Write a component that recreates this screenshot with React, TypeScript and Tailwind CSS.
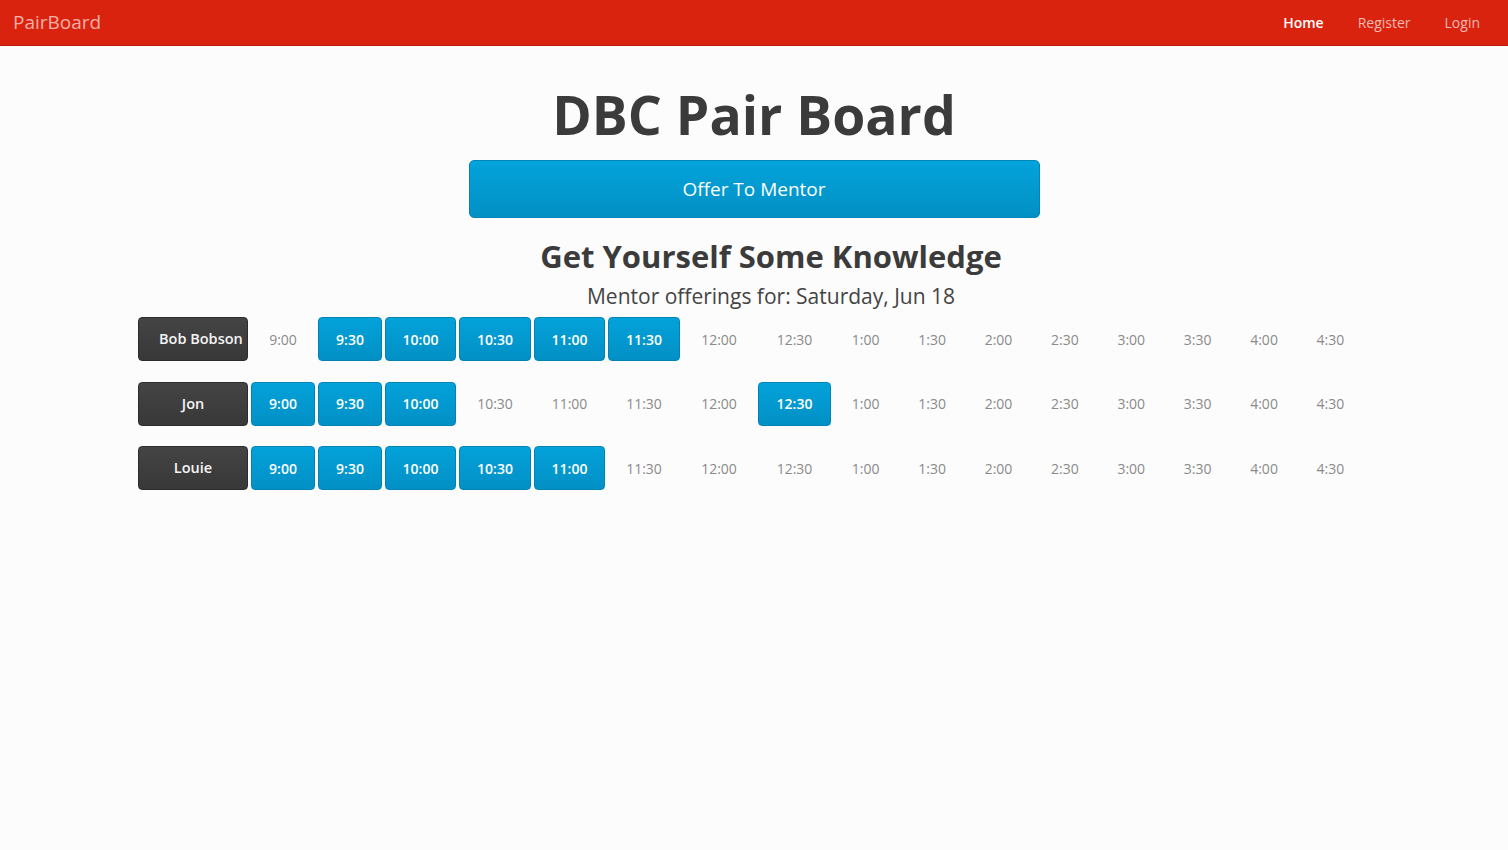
import React from 'react';

const times = ['9:00', '9:30', '10:00', '10:30', '11:00', '11:30', '12:00', '12:30', '1:00', '1:30', '2:00', '2:30', '3:00', '3:30', '4:00', '4:30'];

const mentors = [
  { name: 'Bob Bobson', open: ['9:30', '10:00', '10:30', '11:00', '11:30'] },
  { name: 'Jon', open: ['9:00', '9:30', '10:00', '12:30'] },
  { name: 'Louie', open: ['9:00', '9:30', '10:00', '10:30', '11:00'] },
];

const Navbar: React.FC = () => (
  <nav className="h-[46px] bg-[#d9230f] border-b border-[#b41d0c] flex items-center justify-between pl-[13px] pr-[11px]">
    <a href="#" className="text-[19px] text-[#f7b0a7] leading-none">PairBoard</a>
    <div className="flex items-center text-[14px] text-[#f7b9b1]">
      <a href="#" className="px-[17px] font-semibold text-white">Home</a>
      <a href="#" className="px-[17px]">Register</a>
      <a href="#" className="px-[17px]">Login</a>
    </div>
  </nav>
);

const MentorRow: React.FC<{ name: string; open: string[] }> = ({ name, open }) => (
  <>
    <div className="h-[44px] px-[20px] text-center whitespace-nowrap leading-[42px] text-[14.5px] font-semibold text-[#f4f4f4] rounded-[4px] border border-[#2c2c2c] bg-gradient-to-b from-[#444444] to-[#383838]">
      {name}
    </div>
    {times.map((t) =>
      open.includes(t) ? (
        <a
          key={t}
          href="#"
          className="h-[44px] flex items-center justify-center text-[14px] font-semibold text-white rounded-[4px] border border-[#0283b4] bg-gradient-to-b from-[#03a2da] to-[#0290c5]"
        >
          {t}
        </a>
      ) : (
        <span key={t} className="h-[44px] flex items-center justify-center text-[14px] text-[#8a8a8a]">
          {t}
        </span>
      )
    )}
  </>
);

export default function App() {
  return (
    <div className="min-h-[850px] bg-[#fcfcfc] text-[#3b3b3b]" style={{ fontFamily: '"Open Sans", sans-serif' }}>
      <Navbar />
      <main className="flex flex-col items-center">
        <h1 className="mt-[36px] text-[53.5px] font-bold leading-[66px] text-[#3b3b3b]">DBC Pair Board</h1>
        <a
          href="#"
          className="mt-[12px] w-[571px] h-[58px] flex items-center justify-center text-[19px] text-white rounded-[5px] border border-[#0286b8] bg-gradient-to-b from-[#03a3db] to-[#0290c4]"
        >
          Offer To Mentor
        </a>
      </main>
      <section className="pl-[138px] pr-[104px]">
        <h2 className="mt-[18px] text-center text-[31px] font-bold leading-[40px] text-[#3b3b3b]">Get Yourself Some Knowledge</h2>
        <p className="mt-[4px] text-center text-[21px] leading-[32px] text-[#444444]">Mentor offerings for: Saturday, Jun 18</p>
        <div className="mt-[5px] grid grid-cols-[110px_64px_64px_71px_72px_71px_72px_72px_73px_repeat(8,63.4px)] gap-x-[3px] gap-y-[20.5px]">
          {mentors.map((m) => (
            <MentorRow key={m.name} name={m.name} open={m.open} />
          ))}
        </div>
      </section>
    </div>
  );
}
